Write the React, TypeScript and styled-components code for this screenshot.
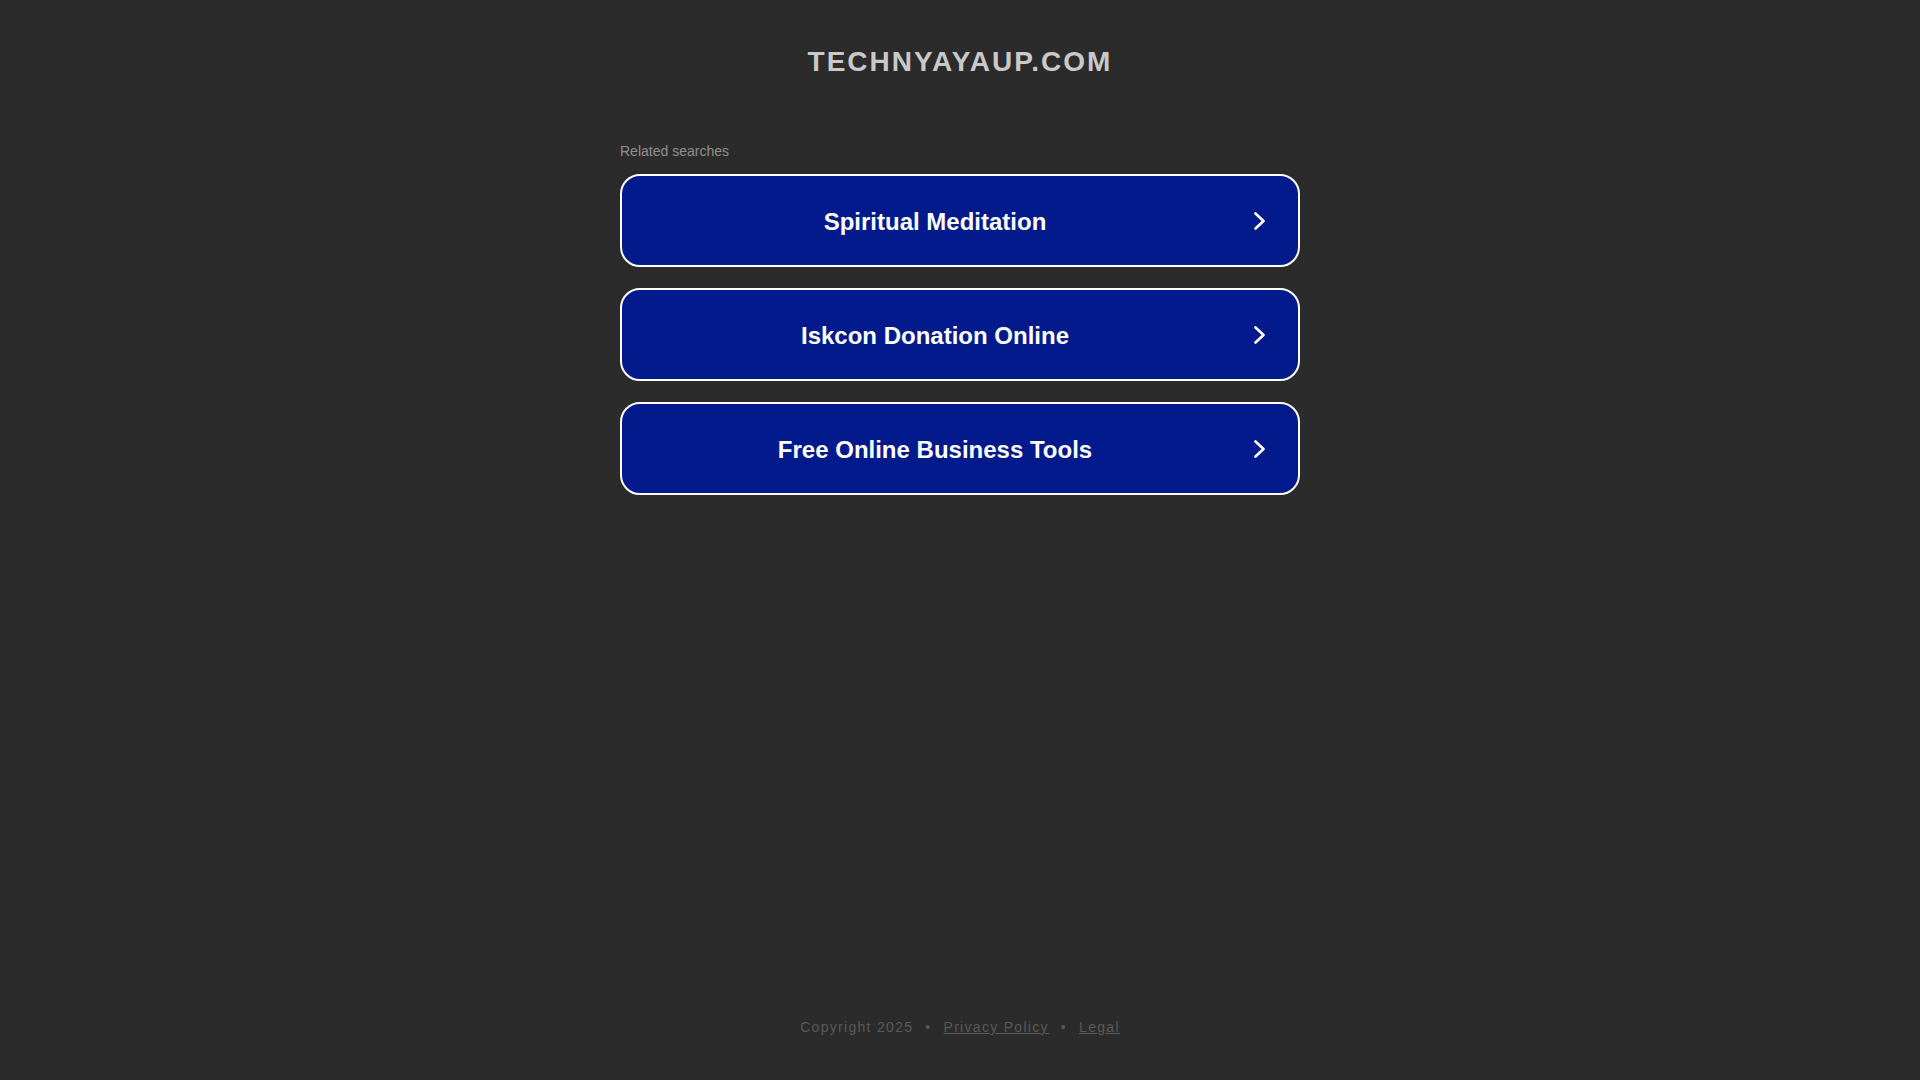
import React, { FC } from 'react'
import styled, { createGlobalStyle } from 'styled-components';

const GlobalStyle = createGlobalStyle`
    html, body {
        margin: 0;
        padding: 0;
        background-color: #2b2b2b;
        font-family: 'Liberation Sans', Arial, sans-serif;
    }
`;

const Page = styled.div`
    min-height: 100vh;
    display: flex;
    flex-direction: column;
    align-items: center;
    box-sizing: border-box;
    padding-top: 46px;
    padding-bottom: 45px;
`;

const DomainTitle = styled.h1`
    margin: 0;
    font-size: 28px;
    line-height: 32px;
    font-weight: bold;
    letter-spacing: 2px;
    color: #c9c9c9;
`;

const SearchBlock = styled.div`
    width: 680px;
    margin-top: 65px;
    display: flex;
    flex-direction: column;
`;

const BlockLabel = styled.div`
    font-size: 14px;
    line-height: 16px;
    color: #8f8f8f;
    margin-bottom: 15px;
`;

const LinkList = styled.div`
    display: flex;
    flex-direction: column;
    gap: 21px;
`;

const SearchLink = styled.a`
    height: 93px;
    box-sizing: border-box;
    border: 2px solid #ffffff;
    border-radius: 20px;
    background-color: #021a8c;
    display: flex;
    align-items: center;
    text-decoration: none;
    cursor: pointer;
`;

const LinkText = styled.span`
    flex: 1;
    text-align: center;
    color: #ffffff;
    font-size: 24px;
    font-weight: bold;
    padding-top: 2px;
`;

const Arrow = styled.span`
    width: 50px;
    display: flex;
    align-items: center;
    padding-left: 6px;
    box-sizing: border-box;
`;

const Footer = styled.div`
    margin-top: auto;
    font-size: 14px;
    line-height: 16px;
    letter-spacing: 1.3px;
    color: #595959;
    display: flex;
    align-items: center;
`;

const Dot = styled.span`
    margin: 0 12px;
`;

const FooterLink = styled.a`
    color: #595959;
    text-decoration: underline;
`;

const Chevron: FC = () => (
    <svg width="12" height="18" viewBox="0 0 12 18">
        <path d="M1.5 1.5 L9.5 9 L1.5 16.5" fill="none" stroke="#ffffff" strokeWidth="2.6" strokeLinecap="round" strokeLinejoin="round" />
    </svg>
);

const searches = ['Spiritual Meditation', 'Iskcon Donation Online', 'Free Online Business Tools'];

export default function App() {
    return (
        <>
            <GlobalStyle />
            <Page>
                <DomainTitle>TECHNYAYAUP.COM</DomainTitle>
                <SearchBlock>
                    <BlockLabel>Related searches</BlockLabel>
                    <LinkList>
                        {searches.map((s) => (
                            <SearchLink key={s}>
                                <LinkText>{s}</LinkText>
                                <Arrow><Chevron /></Arrow>
                            </SearchLink>
                        ))}
                    </LinkList>
                </SearchBlock>
                <Footer>
                    Copyright 2025
                    <Dot>•</Dot>
                    <FooterLink>Privacy Policy</FooterLink>
                    <Dot>•</Dot>
                    <FooterLink>Legal</FooterLink>
                </Footer>
            </Page>
        </>
    )
}
